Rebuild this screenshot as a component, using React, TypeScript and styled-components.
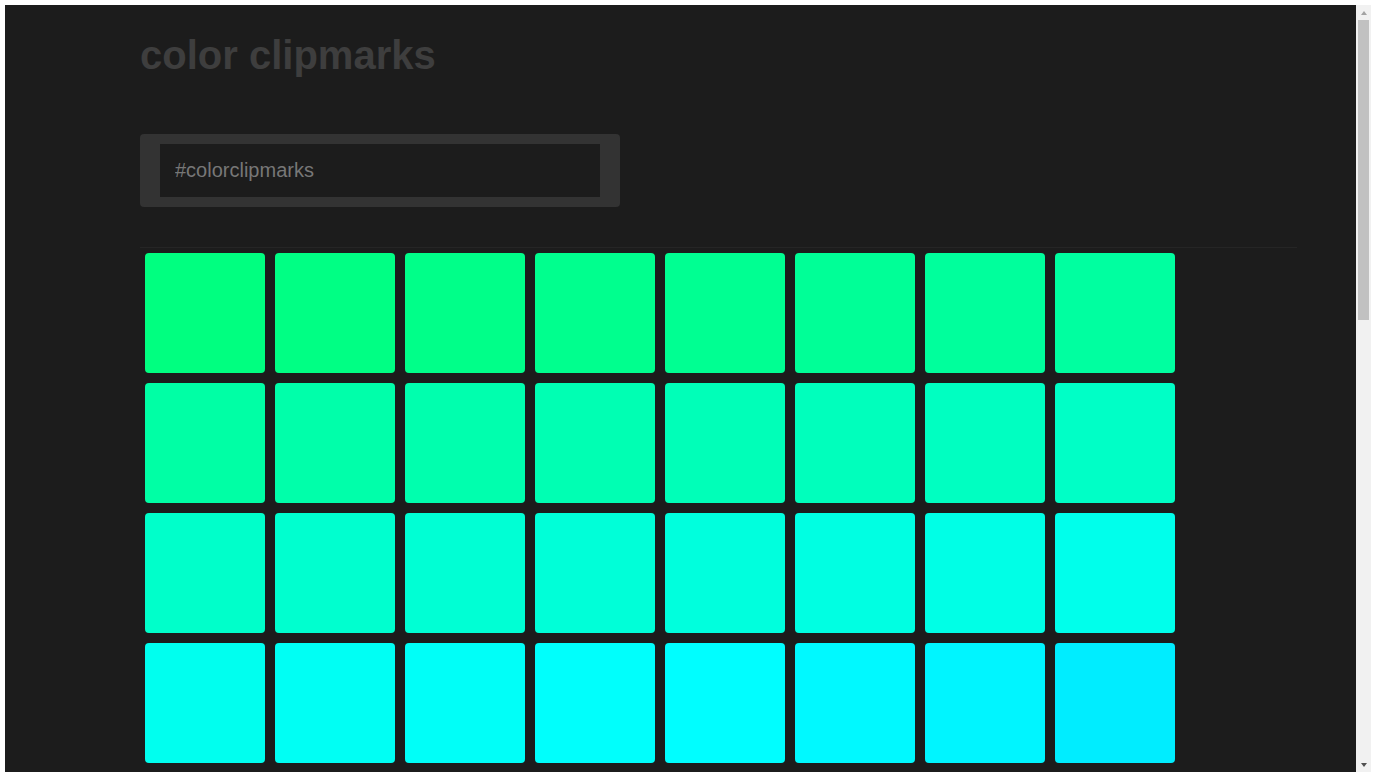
import React from "react";
import styled, { createGlobalStyle } from "styled-components";

const Global = createGlobalStyle`
  html, body { margin: 0; padding: 0; background: #ffffff; }
  body { font-family: "Liberation Sans", Arial, sans-serif; }
  * { box-sizing: border-box; }
`;

const Frame = styled.div`
  display: flex;
  width: 1366px;
  height: 767px;
  margin: 5px 0 0 5px;
`;

const Viewport = styled.div`
  flex: 1;
  overflow: hidden;
  background: #1c1c1c;
`;

const ScrollBar = styled.div`
  display: flex;
  flex-direction: column;
  width: 15px;
  background: #f1f1f1;
`;

const ArrowButton = styled.div`
  display: flex;
  align-items: center;
  justify-content: center;
  height: 15px;
  flex-shrink: 0;
`;

const Triangle = styled.span<{ $dir: "up" | "down"; $color: string }>`
  width: 0;
  height: 0;
  border-left: 3.5px solid transparent;
  border-right: 3.5px solid transparent;
  ${(p) =>
    p.$dir === "up"
      ? `border-bottom: 4px solid ${p.$color};`
      : `border-top: 4px solid ${p.$color};`}
`;

const Track = styled.div`
  flex: 1;
  display: flex;
  flex-direction: column;
`;

const Thumb = styled.div`
  height: 300px;
  margin: 0 2px;
  background: #c1c1c1;
`;

const Container = styled.main`
  margin-left: 135px;
  width: 1157px;
  padding-bottom: 78px;
`;

const Title = styled.h1`
  margin: 27px 0 0;
  font-size: 40px;
  line-height: 46px;
  font-weight: 700;
  color: #3e3e3e;
`;

const SearchBox = styled.form`
  margin-top: 56px;
  width: 480px;
  padding: 10px 20px;
  background: #333333;
  border-radius: 4px;
`;

const SearchInput = styled.input`
  display: block;
  width: 440px;
  height: 53px;
  padding: 0 15px;
  border: none;
  outline: none;
  background: #1c1c1c;
  color: #777777;
  font-family: "Liberation Sans", Arial, sans-serif;
  font-size: 20px;
  &::placeholder { color: #777777; opacity: 1; }
`;

const Divider = styled.hr`
  margin: 40px 0 0;
  border: none;
  height: 1px;
  background: #252525;
`;

const Grid = styled.div`
  display: flex;
  flex-wrap: wrap;
  width: 1040px;
`;

const Swatch = styled.div<{ $color: string }>`
  width: 120px;
  height: 120px;
  margin: 5px;
  border-radius: 4px;
  background: ${(p) => p.$color};
`;

const hueAt = (i: number): number => {
  if (i <= 23) return 150 + i * 1.1;
  if (i <= 30) return 176.3 + (i - 24) * 1.0;
  return 184.3 + (i - 31) * 1.15;
};

const colors = Array.from({ length: 96 }, (_, i) => `hsl(${hueAt(i).toFixed(2)}, 100%, 50%)`);

export default function App() {
  return (
    <>
      <Global />
      <Frame>
        <Viewport>
          <Container>
            <Title>color clipmarks</Title>
            <SearchBox onSubmit={(e) => e.preventDefault()}>
              <SearchInput placeholder="#colorclipmarks" />
            </SearchBox>
            <Divider />
            <Grid>
              {colors.map((c, i) => (
                <Swatch key={i} $color={c} />
              ))}
            </Grid>
          </Container>
        </Viewport>
        <ScrollBar>
          <ArrowButton>
            <Triangle $dir="up" $color="#a3a3a3" />
          </ArrowButton>
          <Track>
            <Thumb />
          </Track>
          <ArrowButton>
            <Triangle $dir="down" $color="#505050" />
          </ArrowButton>
        </ScrollBar>
      </Frame>
    </>
  );
}
